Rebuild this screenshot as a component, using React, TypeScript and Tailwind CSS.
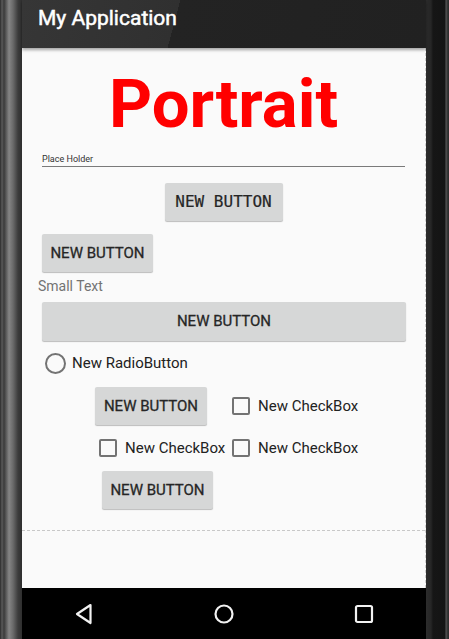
const roboto = "font-['Roboto','Liberation_Sans',sans-serif]"

const Btn = ({ className, mono }: { className: string; mono?: boolean }) => (
    <div
        className={`flex items-center justify-center rounded-[2px] bg-[#d6d7d7] text-[#262626] shadow-[0_1px_1px_rgba(0,0,0,0.25)] ${className} ${mono ? "font-['DejaVu_Sans_Mono','Liberation_Mono',monospace] text-[16px] [-webkit-text-stroke:0.2px_#262626]" : "text-[15px] [-webkit-text-stroke:0.3px_#262626]"}`}
    >
        NEW BUTTON
    </div>
)

const CheckBox = ({ className = "" }: { className?: string }) => (
    <div className={`h-[18px] w-[18px] shrink-0 rounded-[2px] border-2 border-[#737373] ${className}`} />
)

export default function App() {
    return (
        <div className={`flex h-[639px] w-[449px] overflow-hidden bg-[#1b1b1b] ${roboto}`}>
            {/* left bezel */}
            <div className="h-full w-[22px] shrink-0 bg-[linear-gradient(to_right,#2a2a2a_0,#5a5a5a_2px,#3a3a3a_4px,#858585_9px,#6a6a6a_13px,#3c3c3c_18px,#2e2e2e_22px)]" />

            <div className="flex h-full w-[404px] shrink-0 flex-col">
                {/* app bar */}
                <div className="relative z-10 flex h-[48px] items-start bg-[linear-gradient(105deg,#363636_0,#303030_38%,#232323_38%,#212121_100%)] pl-[16px] pt-[3px] shadow-[0_2px_3px_rgba(0,0,0,0.35)]">
                    <span className="text-[21px] leading-[30px] text-white [-webkit-text-stroke:0.5px_#fff]">My Application</span>
                </div>

                {/* content */}
                <div className="flex flex-1 flex-col border-r border-dashed border-[#cfcfcf] bg-[#fafafa]">
                    <div className="mt-[20px] h-[72px] text-center text-[67px] font-bold leading-[72px] text-[#ff0000]">
                        Portrait
                    </div>

                    <div className="ml-[20px] mt-[12px] h-[15px] w-[363px] border-b border-[#7a7a7a] text-[9px] leading-[14px] text-[#333]">
                        Place Holder
                    </div>

                    <div className="mt-[16px] flex justify-center">
                        <Btn mono className="h-[38px] w-[118px]" />
                    </div>

                    <Btn className="ml-[20px] mt-[13px] h-[38px] w-[111px]" />

                    <div className="ml-[16px] mt-[4px] h-[20px] text-[14px] leading-[20px] text-[#737373]">Small Text</div>

                    <Btn className="ml-[20px] mt-[6px] h-[39px] w-[364px]" />

                    <div className="ml-[23px] mt-[10px] flex h-[24px] items-center">
                        <div className="h-[21px] w-[21px] rounded-full border-2 border-[#737373]" />
                        <span className="ml-[6px] text-[15px] text-[#222]">New RadioButton</span>
                    </div>

                    <div className="ml-[73px] mt-[12px] flex items-center">
                        <Btn className="h-[38px] w-[112px]" />
                        <CheckBox className="ml-[25px]" />
                        <span className="ml-[8px] text-[15px] text-[#222]">New CheckBox</span>
                    </div>

                    <div className="ml-[77px] mt-[12px] flex h-[22px] items-center">
                        <CheckBox />
                        <span className="ml-[8px] w-[107px] text-[15px] text-[#222]">New CheckBox</span>
                        <CheckBox />
                        <span className="ml-[8px] text-[15px] text-[#222]">New CheckBox</span>
                    </div>

                    <Btn className="ml-[80px] mt-[12px] h-[38px] w-[111px]" />

                    <div className="mt-[21px] border-t border-dashed border-[#c8c8c8]" />
                </div>

                {/* nav bar */}
                <div className="flex h-[51px] items-center justify-between bg-black px-[52px]">
                    <svg width="20" height="22" viewBox="0 0 20 22" fill="none" stroke="#f2f2f2" strokeWidth="2.2" strokeLinejoin="round">
                        <path d="M16.5 2 L3 11 L16.5 20 Z" />
                    </svg>
                    <svg width="22" height="22" viewBox="0 0 22 22" fill="none" stroke="#f2f2f2" strokeWidth="2.2">
                        <circle cx="11" cy="11" r="8.5" />
                    </svg>
                    <svg width="20" height="20" viewBox="0 0 20 20" fill="none" stroke="#f2f2f2" strokeWidth="2.2">
                        <rect x="2" y="2" width="16" height="16" rx="1.5" />
                    </svg>
                </div>
            </div>

            {/* right bezel */}
            <div className="h-full w-[23px] shrink-0 bg-[linear-gradient(to_right,#2c2c2c_0,#262626_5px,#161616_7px,#141414_19px,#5a5a5a_20px,#3a3a3a_21px,#2a2a2a_23px)]" />
        </div>
    )
}
